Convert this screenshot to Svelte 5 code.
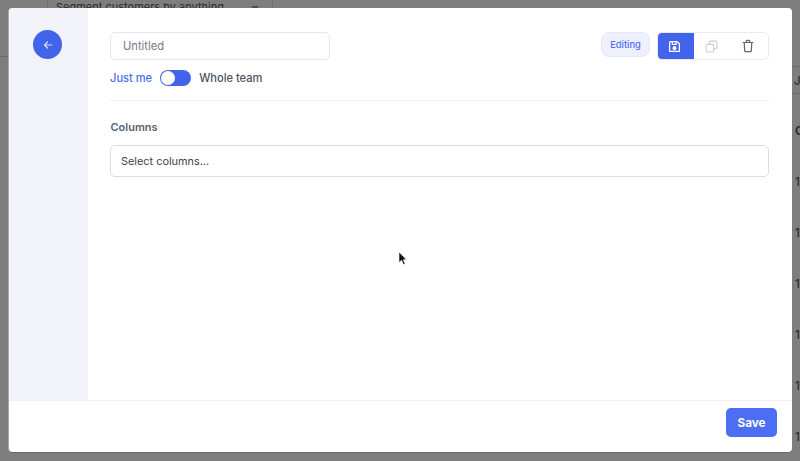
<script>
  const rows = [1, 2, 3, 4, 5, 6];
</script>

<div class="page">
  <div class="under">
    <div class="under-left">
      <div class="strip"></div>
      <div class="top-field"><span>Segment customers by anything</span><i class="caret"></i></div>
    </div>
    <div class="edge-col">
      <div class="edge-head">J</div>
      <div class="edge-title">C</div>
      {#each rows as r (r)}
        <div class="edge-row">1</div>
      {/each}
    </div>
  </div>

  <div class="modal">
    <div class="main">
      <aside class="rail">
        <button class="back" aria-label="Back">
          <svg width="12" height="12" viewBox="0 0 24 24" fill="none" stroke="#d5dcfb" stroke-width="2.4" stroke-linecap="round" stroke-linejoin="round"><path d="M20 12H5M11 6l-6 6 6 6" /></svg>
        </button>
      </aside>
      <section class="content">
        <div class="head">
          <div class="head-left">
            <input class="name" placeholder="Untitled" />
            <div class="share">
              <span class="me">Just me</span>
              <span class="toggle"><span class="knob"></span></span>
              <span class="team">Whole team</span>
            </div>
          </div>
          <div class="head-right">
            <span class="badge">Editing</span>
            <div class="actions">
              <button class="act primary" aria-label="Save">
                <svg width="13" height="13" viewBox="0 0 24 24" fill="none" stroke="#fff" stroke-width="2.4" stroke-linejoin="round"><path d="M4 3h13l4 4v14H3V4z" /><path d="M8 3v5h7V3" /><circle cx="12" cy="15" r="2.5" fill="#fff" /></svg>
              </button>
              <button class="act copy" aria-label="Copy">
                <svg width="13" height="13" viewBox="0 0 24 24" fill="none" stroke="#c9ccd2" stroke-width="2" stroke-linejoin="round"><rect x="2" y="8" width="14" height="14" rx="2" /><path d="M8 8V4a2 2 0 0 1 2-2h10a2 2 0 0 1 2 2v10a2 2 0 0 1-2 2h-4" /></svg>
              </button>
              <button class="act trash" aria-label="Delete">
                <svg width="14" height="14" viewBox="0 0 24 24" fill="none" stroke="#5f6675" stroke-width="2.1" stroke-linecap="round" stroke-linejoin="round"><path d="M3.5 6h17M9 6V3.5a1 1 0 0 1 1-1h4a1 1 0 0 1 1 1V6M5.5 6l.8 14a2 2 0 0 0 2 1.8h7.4a2 2 0 0 0 2-1.8l.8-14" /></svg>
              </button>
            </div>
          </div>
        </div>
        <hr class="rule" />
        <div class="label">Columns</div>
        <div class="select">Select columns...</div>
      </section>
    </div>
    <footer class="foot">
      <button class="save">Save</button>
    </footer>
    <svg class="cursor" width="10" height="15" viewBox="0 0 10 15"><path d="M1 1v10.5l2.6-2.2 1.8 4.2 1.7-.8-1.8-4h3.2z" fill="#111" stroke="#fff" stroke-width=".6" /></svg>
  </div>
</div>

<style>
  :global(body) {
    margin: 0;
    background: #7e7e7e;
  }
  .page {
    position: relative;
    width: 800px;
    height: 461px;
    overflow: hidden;
    font-family: Inter, "Liberation Sans", sans-serif;
    background: #7e7e7e;
  }
  .under {
    height: 100%;
    display: flex;
    justify-content: space-between;
    color: #2c2c2c;
  }
  .under-left {
    display: flex;
    align-items: flex-start;
  }
  .strip {
    width: 47px;
    height: 57px;
    box-sizing: border-box;
    border-bottom: 1px solid #6d6d6d;
  }
  .top-field {
    box-sizing: border-box;
    width: 226px;
    height: 57px;
    border-left: 1px solid #6d6d6d;
    border-right: 1px solid #6d6d6d;
    padding: 0 8px;
    display: flex;
    justify-content: space-between;
    font-size: 11px;
    line-height: 14px;
  }
  .caret {
    margin: 6px 5px 0 0;
    width: 0;
    height: 0;
    border: 4px solid transparent;
    border-top: 4px solid #4a4a4a;
  }
  .edge-col {
    box-sizing: border-box;
    width: 8px;
    padding-top: 66px;
    font-size: 11.5px;
    font-weight: 500;
  }
  .edge-head {
    height: 26px;
    line-height: 28px;
    border-top: 1px solid #6d6d6d;
    border-bottom: 1px solid #6d6d6d;
    margin-left: -4px;
    padding-left: 6px;
    white-space: nowrap;
  }
  .edge-title {
    padding-left: 3px;
    margin-top: 30px;
    line-height: 14px;
    font-weight: 700;
  }
  .edge-row {
    padding-left: 3px;
    margin-top: 37px;
    line-height: 14px;
  }
  .modal {
    position: absolute;
    left: 9px;
    top: 8px;
    width: 783px;
    height: 444px;
    display: flex;
    flex-direction: column;
    background: #fff;
    border-radius: 4px;
    overflow: hidden;
    box-shadow: -1px 0 0 #a8a8a8, 0 1px 0 #6c6c6c;
  }
  .main {
    flex: 1;
    display: flex;
    min-height: 0;
  }
  .rail {
    width: 79px;
    flex: none;
    background: #f2f3f8;
    padding: 22px 0 0 23px;
    border-left: 1px solid #fafafd;
    box-sizing: border-box;
  }
  .back {
    width: 29px;
    height: 29px;
    padding: 0;
    border: none;
    border-radius: 50%;
    background: #4263eb;
    display: flex;
    align-items: center;
    justify-content: center;
  }
  .content {
    flex: 1;
    padding: 24px 23px 0 22px;
    min-width: 0;
  }
  .head {
    display: flex;
    justify-content: space-between;
  }
  .name {
    display: block;
    box-sizing: border-box;
    width: 220px;
    height: 28px;
    border: 1px solid #e3e6ec;
    border-radius: 5px;
    padding: 0 12px 1px;
    font: 400 11.2px Inter, "Liberation Sans", sans-serif;
    background: #fff;
    outline: none;
  }
  .name::placeholder {
    color: #747a87;
    opacity: 1;
  }
  .share {
    display: flex;
    align-items: center;
    margin-top: 10px;
    font-size: 11.1px;
    font-weight: 500;
    line-height: 16px;
  }
  .me {
    color: #4c6ef5;
  }
  .toggle {
    box-sizing: border-box;
    margin: 0 8px;
    width: 31px;
    height: 16px;
    border-radius: 8px;
    background: #4263eb;
    padding: 1px;
  }
  .knob {
    display: block;
    width: 14px;
    height: 14px;
    border-radius: 50%;
    background: #fff;
  }
  .team {
    color: #4c5260;
  }
  .head-right {
    display: flex;
    align-items: flex-start;
    gap: 7px;
  }
  .badge {
    box-sizing: border-box;
    width: 49px;
    height: 25px;
    text-align: center;
    border: 1px solid #e4e8f8;
    border-radius: 8px;
    background: #eef0fb;
    color: #4c6ef5;
    font-size: 9.3px;
    font-weight: 500;
    line-height: 23px;
  }
  .actions {
    display: flex;
    height: 28px;
    width: 112px;
    border-radius: 5px;
    box-sizing: border-box;
    border: 1px solid #e9ebf0;
    overflow: hidden;
    background: #fff;
  }
  .act {
    padding: 0;
    border: none;
    background: transparent;
    display: flex;
    align-items: center;
    justify-content: center;
  }
  .act.primary {
    flex: none;
    width: 37px;
    margin: -1px 0 -1px -1px;
    background: #4263eb;
    padding-right: 2px;
  }
  .act.copy {
    width: 34px;
  }
  .act.trash {
    width: 40px;
  }
  .rule {
    margin: 14px 0 0;
    border: none;
    border-top: 1px solid #eef0f4;
  }
  .label {
    margin-top: 18px;
    color: #5c6373;
    font-size: 11px;
    font-weight: 600;
    line-height: 16px;
    padding-left: 0.5px;
  }
  .select {
    box-sizing: border-box;
    margin-top: 10px;
    height: 32px;
    border: 1px solid #d6dfe8;
    border-radius: 5px;
    padding: 0 10px;
    color: #3f4350;
    font-size: 10.9px;
    line-height: 30px;
  }
  .foot {
    box-sizing: border-box;
    height: 52px;
    flex: none;
    border-top: 1px solid #eef0f6;
    display: flex;
    justify-content: flex-end;
    padding: 7px 15px 0 0;
  }
  .save {
    width: 51px;
    height: 29px;
    border: none;
    border-radius: 5px;
    background: #4c6ef5;
    color: #fff;
    font: 700 11.7px Inter, "Liberation Sans", sans-serif;
  }
  .cursor {
    position: absolute;
    left: 389px;
    top: 243px;
  }
</style>
